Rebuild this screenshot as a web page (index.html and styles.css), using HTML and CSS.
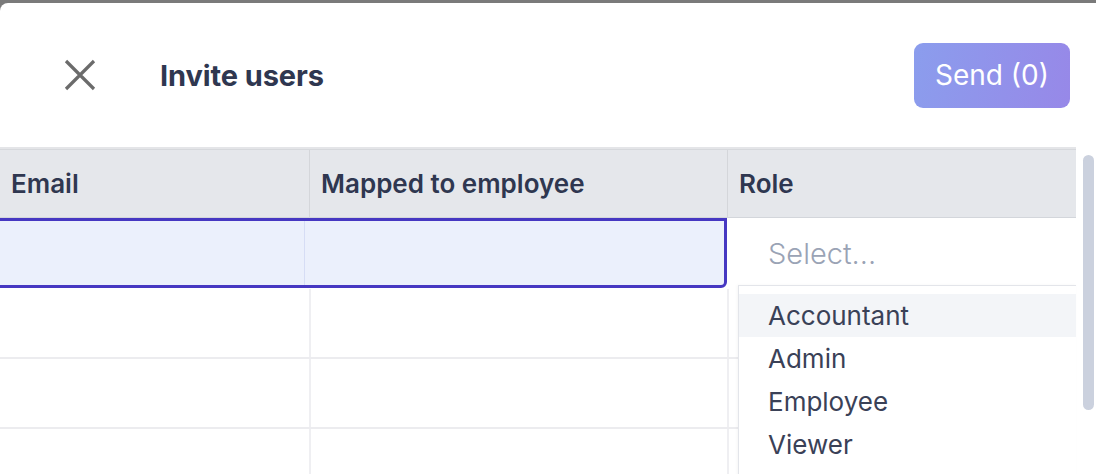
FILE: index.html
```html
<!DOCTYPE html>
<html>
<head>
<meta charset="utf-8">
<link rel="stylesheet" href="styles.css">
</head>
<body>
<div class="panel">
  <div class="header">
    <button class="close" aria-label="Close">
      <svg width="32" height="32" viewBox="0 0 32 32"><path d="M2 2 L30 30 M30 2 L2 30" stroke="#6b6b6b" stroke-width="3.2" stroke-linecap="butt" fill="none"/></svg>
    </button>
    <h1 class="title">Invite users</h1>
    <button class="send">Send (0)</button>
  </div>
  <div class="table">
    <div class="row head">
      <div class="cell">Email</div>
      <div class="cell">Mapped to employee</div>
      <div class="cell">Role</div>
    </div>
    <div class="row active">
      <div class="sel">
        <div class="cell"></div>
        <div class="cell"></div>
      </div>
      <div class="cell role">
        <div class="select">Select...</div>
        <ul class="menu">
          <li class="hi">Accountant</li>
          <li>Admin</li>
          <li>Employee</li>
          <li>Viewer</li>
        </ul>
      </div>
    </div>
    <div class="row body"><div class="cell"></div><div class="cell"></div><div class="cell"></div></div>
    <div class="row body"><div class="cell"></div><div class="cell"></div><div class="cell"></div></div>
    <div class="row body"><div class="cell"></div><div class="cell"></div><div class="cell"></div></div>
    <div class="scrollbar"></div>
  </div>
</div>
</body>
</html>
```
FILE: styles.css
```css
* { box-sizing: border-box; }
html, body { margin: 0; padding: 0; }
body {
  background: #7a7a7a;
  font-family: Inter, "Noto Sans", sans-serif;
  width: 1096px;
  height: 474px;
  overflow: hidden;
}
.panel {
  margin-top: 3px;
  height: 471px;
  background: #fff;
  border-top-left-radius: 8px;
  overflow: hidden;
  position: relative;
}
.header {
  height: 144px;
  display: flex;
  align-items: center;
  padding: 0 26px 0 64px;
}
.close {
  width: 32px;
  height: 32px;
  padding: 0;
  border: 0;
  background: none;
  display: flex;
}
.title {
  margin: 0 0 0 64px;
  font-size: 29px;
  font-weight: 700;
  color: #2f3750;
  letter-spacing: -0.1px;
}
.send {
  margin-left: auto;
  width: 156px;
  height: 65px;
  border: 0;
  border-radius: 9px;
  background: linear-gradient(100deg, #8b9ded 0%, #9788e8 100%);
  color: #fff;
  font-family: Inter, "Noto Sans", sans-serif;
  font-size: 28px;
  font-weight: 400;
  padding: 0;
}
.table {
  border-top: 2px solid #e4e5e8;
  position: relative;
  width: 1076px;
}
.row {
  display: grid;
  grid-template-columns: 309px 418px 349px;
}
.head {
  height: 69px;
  background: #e5e7eb;
  border-top: 1px solid #d6d8dc;
  border-bottom: 1px solid #d3d6db;
}
.head .cell {
  display: flex;
  align-items: center;
  padding-left: 11px;
  font-size: 26px;
  font-weight: 600;
  color: #2f3750;
  border-left: 1px solid #d4d6da;
}
.head .cell:first-child { border-left: 0; }
.active {
  height: 71px;
  position: relative;
}
.sel {
  grid-column: 1 / 3;
  display: grid;
  grid-template-columns: 309px 418px;
  margin-left: -4px;
  border: 3px solid #4638c2;
  border-bottom-right-radius: 6px;
  background: #ebf0fc;
  height: 70px;
}
.sel .cell:first-child { width: 309px; margin-left: 1px; }
.sel .cell + .cell { border-left: 1px solid #d6ddf5; margin-left: -4px; }
.role {
  position: relative;
  background: #fff;
}
.select {
  height: 70px;
  display: flex;
  align-items: center;
  padding-left: 41px;
  font-size: 29px;
  font-weight: 300;
  color: #9aa3b5;
}
.menu {
  position: absolute;
  left: 11px;
  right: 0;
  top: 67px;
  margin: 0;
  padding: 8px 0 0;
  list-style: none;
  background: #fff;
  border-top: 1px solid #e3e5ea;
  border-left: 1px solid #e3e5ea;
  box-shadow: -1px 0 3px rgba(0,0,0,0.04);
  z-index: 2;
  height: 200px;
}
.menu li {
  height: 43px;
  display: flex;
  align-items: center;
  padding-left: 29px;
  font-size: 26px;
  color: #3a4157;
}
.menu li.hi { background: #f3f5f8; }
.body {
  height: 70px;
  border-bottom: 2px solid #ececef;
}
.body .cell { border-left: 2px solid #efeff2; }
.body .cell:first-child { border-left: 0; }
.scrollbar {
  position: absolute;
  left: 1083px;
  top: 6px;
  width: 11px;
  height: 255px;
  border-radius: 6px;
  background: #cbd1de;
}
```
